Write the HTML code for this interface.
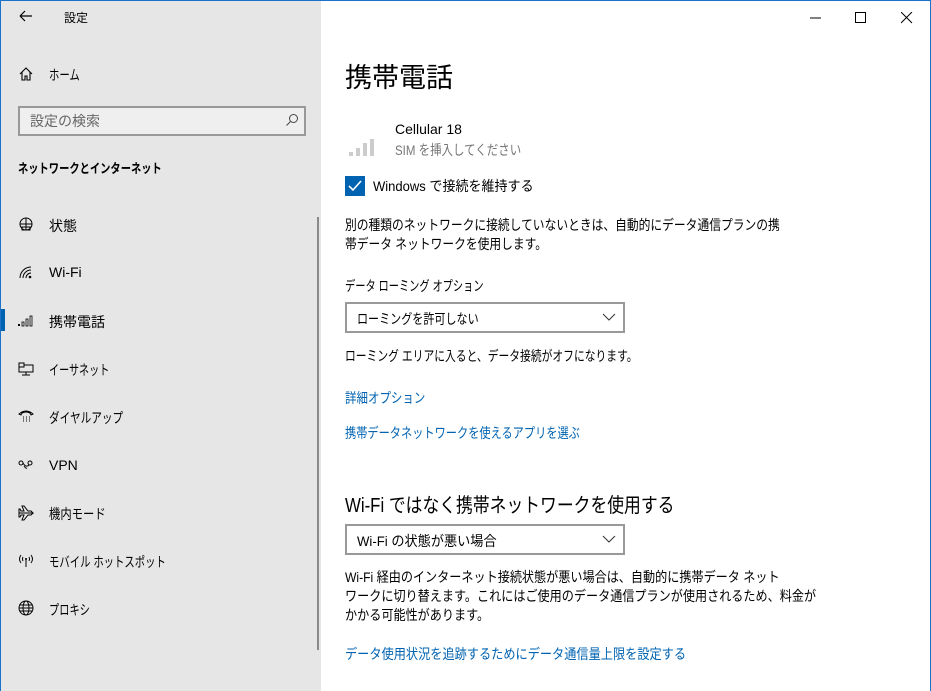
<!DOCTYPE html>
<html><head><meta charset="utf-8"><style>
*{margin:0;padding:0;box-sizing:border-box}
body{width:931px;height:691px;overflow:hidden;background:#fff;font-family:"Liberation Sans","Noto Sans CJK JP",sans-serif;color:#000;position:relative;font-size:14px}
.win{position:absolute;inset:0;border:1px solid #1a73c8;border-bottom:none}
.left{position:absolute;left:1px;top:0;width:320px;height:691px;background:#e6e6e6}
.t{position:absolute;white-space:nowrap;transform-origin:0 0}
.ico{position:absolute}
.blue{color:#0063b1}
</style></head><body>
<div class="left">
  <svg class="ico" style="left:18px;top:10px" width="14" height="12"><path d="M1 6H13M1 6L6 1M1 6L6 11" stroke="#000" stroke-width="1.2" fill="none"/></svg>
  <div class="t" style="left:63px;top:9px;font-size:12px">設定</div>
  <svg class="ico" style="left:18px;top:67px" width="14" height="14"><path d="M1 7L7 1L13 7M3 5V13H6V9H8V13H11V5" stroke="#000" stroke-width="1.1" fill="none"/></svg>
  <div class="t" style="left:48px;top:65px;transform:scaleX(.74)">ホーム</div>
  <div style="position:absolute;left:17px;top:106px;width:288px;height:30px;border:2px solid #999;background:#efefef"></div>
  <div class="t" style="left:29px;top:111px;color:#666">設定の検索</div>
  <svg class="ico" style="left:284px;top:113px" width="14" height="14"><circle cx="8.5" cy="5.5" r="4" stroke="#444" fill="none"/><path d="M5.5 8.5L1.5 12.5" stroke="#444"/></svg>
  <div class="t" style="left:17px;top:158px;font-weight:bold;font-size:13px;transform:scaleX(.79)">ネットワークとインターネット</div>
  <div style="position:absolute;left:316px;top:217px;width:2px;height:433px;background:#8a8a8a"></div>
  <div style="position:absolute;left:0;top:309px;width:4px;height:22px;background:#0063b1"></div>
  <svg class="ico" style="left:17px;top:217px" width="16" height="16"><circle cx="8" cy="7" r="6" stroke="#000" fill="none"/><path d="M2 7H14M8 1V13M4 10H12V13H4Z" stroke="#000" fill="none"/></svg>
  <div class="t" style="left:48px;top:216px">状態</div>
  <svg class="ico" style="left:18px;top:266px" width="14" height="14"><path d="M1 12A11 11 0 0 1 12 1M4 12A8 8 0 0 1 12 4M7 12A5 5 0 0 1 12 7" stroke="#000" fill="none"/><circle cx="11" cy="11" r="1.3"/></svg>
  <div class="t" style="left:48px;top:264px">Wi-Fi</div>
  <svg class="ico" style="left:17px;top:315px" width="16" height="12"><rect x="0" y="9" width="2" height="2"/><rect x="4" y="7" width="2" height="4" fill="none" stroke="#000" stroke-width=".8"/><rect x="8" y="4" width="2" height="7" fill="none" stroke="#000" stroke-width=".8"/><rect x="12" y="1" width="2" height="10" fill="none" stroke="#000" stroke-width=".8"/></svg>
  <div class="t" style="left:48px;top:312px">携帯電話</div>
  <svg class="ico" style="left:17px;top:362px" width="16" height="14"><path d="M1 1H6V5H1ZM6 3H15V10H1V5M8 10V13M4 13H12" stroke="#000" fill="none"/></svg>
  <div class="t" style="left:48px;top:360px;transform:scaleX(.72)">イーサネット</div>
  <svg class="ico" style="left:17px;top:409px" width="16" height="14"><path d="M1 5Q8 -1 15 5L13 6L12 4Q8 2 4 4L3 6Z" stroke="#000" fill="none"/><path d="M5 8h1M8 8h1M11 8h1M5 10h1M8 10h1M11 10h1M5 12h1M8 12h1M11 12h1" stroke="#000"/></svg>
  <div class="t" style="left:48px;top:408px;transform:scaleX(.76)">ダイヤルアップ</div>
  <svg class="ico" style="left:17px;top:460px" width="16" height="10"><circle cx="3" cy="3" r="2" stroke="#000" fill="none"/><circle cx="12" cy="3" r="2" stroke="#000" fill="none"/><path d="M5 3Q8 8 11 5M6 6Q8 9 9 8" stroke="#000" fill="none"/></svg>
  <div class="t" style="left:48px;top:457px">VPN</div>
  <svg class="ico" style="left:17px;top:505px" width="16" height="16"><path d="M1 8H15L13 6H10L6 1H4L6 6H3L2 4H1V12H2L3 10H6L4 15H6L10 10H13L15 8" stroke="#000" fill="none"/></svg>
  <div class="t" style="left:48px;top:504px;transform:scaleX(.81)">機内モード</div>
  <svg class="ico" style="left:17px;top:554px" width="16" height="14"><path d="M3 1Q0 5 3 9M13 1Q16 5 13 9M5 3Q4 5 5 7M11 3Q12 5 11 7M8 4V13" stroke="#000" fill="none"/><circle cx="8" cy="5" r="1"/></svg>
  <div class="t" style="left:48px;top:552px;transform:scaleX(.74)">モバイル ホットスポット</div>
  <svg class="ico" style="left:17px;top:600px" width="16" height="16"><circle cx="8" cy="8" r="7" stroke="#000" fill="none"/><ellipse cx="8" cy="8" rx="3" ry="7" stroke="#000" fill="none"/><path d="M1 8H15M2 5H14M2 11H14" stroke="#000" fill="none"/></svg>
  <div class="t" style="left:48px;top:600px;transform:scaleX(.73)">プロキシ</div>
</div>
<svg class="ico" style="left:810px;top:12px" width="12" height="12"><path d="M0 6H11" stroke="#000"/></svg>
<svg class="ico" style="left:855px;top:12px" width="12" height="12"><rect x=".5" y=".5" width="10" height="10" stroke="#000" fill="none"/></svg>
<svg class="ico" style="left:901px;top:12px" width="12" height="12"><path d="M0 0L11 11M11 0L0 11" stroke="#000"/></svg>
<div class="t" style="left:345px;top:56px;font-size:27px">携帯電話</div>
<svg class="ico" style="left:349px;top:137px" width="32" height="20"><rect x="0" y="15" width="4" height="4" fill="#ccc"/><rect x="7" y="11" width="4" height="8" fill="#ccc"/><rect x="14" y="6" width="4" height="13" fill="#ccc"/><rect x="21" y="2" width="4" height="17" fill="#ccc"/></svg>
<div class="t" style="left:395px;top:121px">Cellular 18</div>
<div class="t" style="left:395px;top:140px;color:#767676;transform:scaleX(.82)">SIM を挿入してください</div>
<div style="position:absolute;left:345px;top:176px;width:20px;height:20px;background:#0063b1"></div>
<svg class="ico" style="left:345px;top:176px" width="20" height="20"><path d="M4 10L8 14L16 5" stroke="#fff" stroke-width="1.6" fill="none"/></svg>
<div class="t" style="left:373px;top:176px;transform:scaleX(.93)">Windows で接続を維持する</div>
<div class="t" style="left:345px;top:216px;line-height:19px;transform:scaleX(.84)">別の種類のネットワークに接続していないときは、自動的にデータ通信プランの携<br>帯データ ネットワークを使用します。</div>
<div class="t" style="left:345px;top:276px;transform:scaleX(.73)">データ ローミング オプション</div>
<div style="position:absolute;left:345px;top:302px;width:280px;height:31px;border:2px solid #999"></div>
<div class="t" style="left:357px;top:309px;transform:scaleX(.79)">ローミングを許可しない</div>
<svg class="ico" style="left:602px;top:313px" width="14" height="8"><path d="M1 1L7 7L13 1" stroke="#333" fill="none"/></svg>
<div class="t" style="left:345px;top:346px;transform:scaleX(.77)">ローミング エリアに入ると、データ接続がオフになります。</div>
<div class="t blue" style="left:345px;top:388px;transform:scaleX(.82)">詳細オプション</div>
<div class="t blue" style="left:345px;top:423px;transform:scaleX(.8)">携帯データネットワークを使えるアプリを選ぶ</div>
<div class="t" style="left:345px;top:489px;font-size:20px;transform:scaleX(.84)">Wi-Fi ではなく携帯ネットワークを使用する</div>
<div style="position:absolute;left:345px;top:524px;width:280px;height:31px;border:2px solid #999"></div>
<div class="t" style="left:357px;top:531px;transform:scaleX(.94)">Wi-Fi の状態が悪い場合</div>
<svg class="ico" style="left:602px;top:535px" width="14" height="8"><path d="M1 1L7 7L13 1" stroke="#333" fill="none"/></svg>
<div class="t" style="left:345px;top:568px;line-height:19px;transform:scaleX(.865)">Wi-Fi 経由のインターネット接続状態が悪い場合は、自動的に携帯データ ネット<br>ワークに切り替えます。これにはご使用のデータ通信プランが使用されるため、料金が<br>かかる可能性があります。</div>
<div class="t blue" style="left:345px;top:644px;transform:scaleX(.87)">データ使用状況を追跡するためにデータ通信量上限を設定する</div>
<div class="win"></div>
</body></html>
